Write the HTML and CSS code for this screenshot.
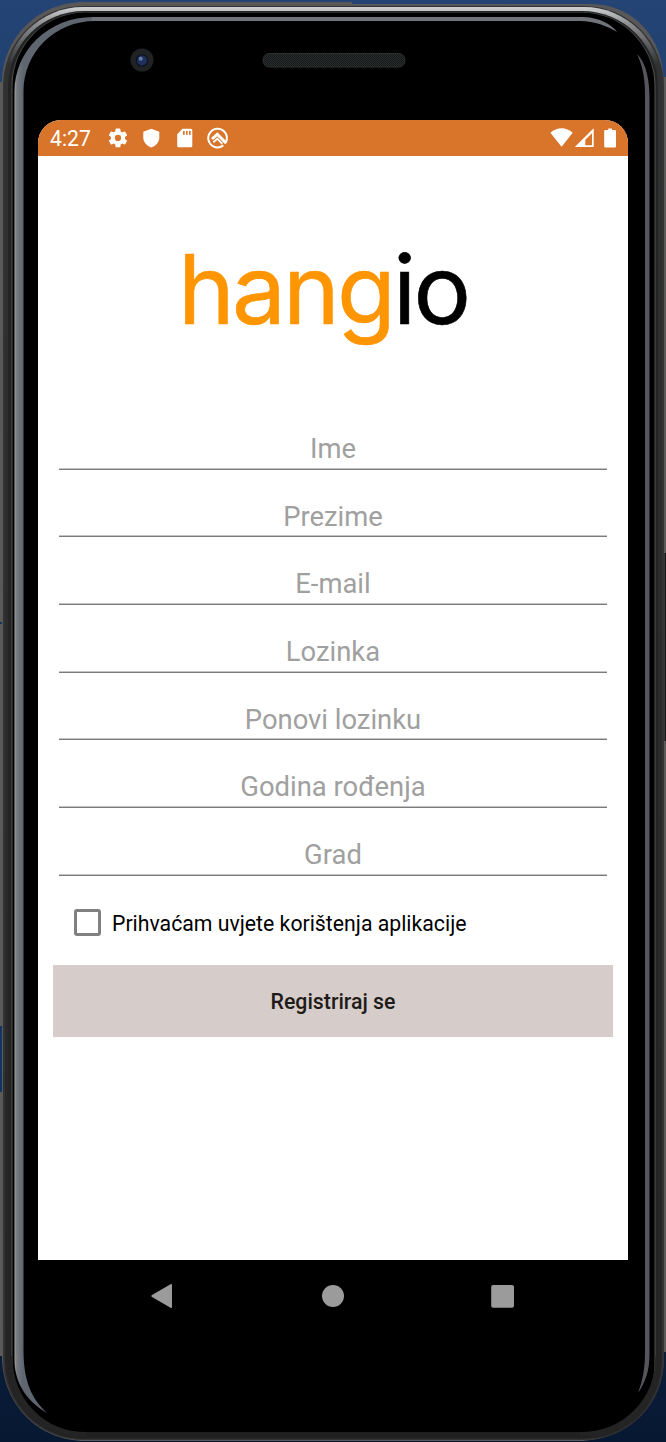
FILE: index.html
```
<!DOCTYPE html>
<html lang="hr">
<head>
<meta charset="utf-8">
<title>hangio</title>
<link rel="stylesheet" href="styles.css">
</head>
<body>
<div class="device">
  <svg class="frame" viewBox="0 0 666 1442" width="666" height="1442" aria-hidden="true">
    <defs>
      <linearGradient id="wall" x1="0" y1="0" x2="0" y2="1"><stop offset="0" stop-color="#234474"/><stop offset=".9" stop-color="#0b1f3d"/><stop offset="1" stop-color="#071832"/></linearGradient>
      <linearGradient id="metal" x1="0" y1="0" x2="0" y2="1"><stop offset="0" stop-color="#d0d1d3"/><stop offset=".012" stop-color="#8b8d8f"/><stop offset=".04" stop-color="#303132"/><stop offset="1" stop-color="#242424"/></linearGradient>
      <linearGradient id="glint" gradientUnits="userSpaceOnUse" x1="14" y1="0" x2="23" y2="0"><stop offset="0" stop-color="#aaaaac"/><stop offset=".3" stop-color="#777a80"/><stop offset="1" stop-color="#5f6670"/></linearGradient>
      <pattern id="mesh" width="2" height="2" patternUnits="userSpaceOnUse"><rect width="2" height="2" fill="#292c2c"/><path d="M0 0h1v1h-1zM1 1h1v1h-1z" fill="#171919"/></pattern>
    </defs>
    <rect width="666" height="1442" fill="url(#wall)"/>
    <path d="M0 82h3v1274H0zM664 77h2v1275h-2z" fill="#5c5959"/>
    <path d="M0 1026h2v66H0zM0 622h2v2H0z" fill="#123565"/>
    <path d="M84 2H352V4H590C635 4 664 39 664 84V1356C664 1404 626 1441 578 1441H86C38 1441 2 1404 2 1356V84C2 38 38 2 84 2Z" fill="#595757"/>
    <rect x="3" y="6" width="661" height="1434" rx="80" fill="#333"/>
    <rect x="5" y="7" width="657" height="1432" rx="78" fill="url(#metal)"/>
    <rect x="8" y="11" width="650" height="1427" rx="76" fill="#242424"/>
    <rect x="11.5" y="12" width="644" height="1425" rx="74" fill="#505152"/>
    <rect x="12.5" y="12.5" width="642" height="1424.5" rx="73" fill="#000"/>
    <rect x="86" y="1432" width="494" height="5" fill="#202020"/>
    <path d="M86 1434.5C44 1434.5 10 1402 10 1356M580 1434.5C624 1434.5 658 1402 658 1356" fill="none" stroke="#242424" stroke-width="5"/>
    <path d="M93 17C49 17 14.500 50 14.500 92V1360C14.500 1384 28 1402 47 1413C32 1399 23.500 1382 23.500 1350V92C23.500 52 55 21 95 21Z" fill="url(#glint)"/>
    <path d="M92 17H584C600 18 611 24 617 32C607 26 595 21 580 21H92Z" fill="#70737a"/>
    <path d="M637 54C647 64 649.500 82 649.500 98V1355C649.500 1371 645 1383 638 1393C643 1380 645 1367 645 1352V94C645 76 642 65 637 54Z" fill="#55555d"/>
    <path d="M664.500 553h1.500v188h-1.500z" fill="#151515"/>
    <path d="M302 1441h8v1h-8zM322 1441h8v1h-8zM348 1441h12v1h-12z" fill="#071832"/>
    <circle cx="142" cy="60" r="11.500" fill="#202224"/>
    <circle cx="142" cy="60.500" r="6.300" fill="#0c1124"/>
    <circle cx="142" cy="60.500" r="5" fill="#20305d"/>
    <circle cx="140.700" cy="58.700" r="2" fill="#687ba6"/>
    <rect x="263" y="53.500" width="142" height="13.500" rx="6.500" fill="url(#mesh)" stroke="#2d3030"/>
  </svg>

  <main class="screen">
    <header class="status">
      <span class="time">4:27</span>
      <svg class="notices" viewBox="0 0 124 24" width="124" height="24" aria-hidden="true">
        <g fill="#fff">
          <path transform="translate(-.8 .2) scale(.98)" d="M19.140 12.940c.04-.3.06-.61.06-.94s-.02-.64-.07-.94l2.030-1.580a.49.49 0 0 0 .12-.61l-1.920-3.320a.49.49 0 0 0-.59-.22l-2.390.96a7 7 0 0 0-1.620-.94l-.36-2.540a.48.48 0 0 0-.48-.41h-3.840a.47.47 0 0 0-.47.41l-.36 2.540c-.59.24-1.130.57-1.620.94l-2.390-.96a.47.47 0 0 0-.59.22L2.740 8.870a.47.47 0 0 0 .12.61l2.030 1.580a6 6 0 0 0 0 1.880l-2.030 1.580a.49.49 0 0 0-.12.61l1.920 3.320c.12.22.37.29.59.22l2.390-.96c.5.38 1.030.7 1.620.94l.36 2.540c.05.24.24.41.48.41h3.840c.24 0 .44-.17.47-.41l.36-2.540a7 7 0 0 0 1.620-.94l2.390.96c.22.080.47 0 .59-.22l1.920-3.320a.47.47 0 0 0-.12-.61zM12 15.200a3.200 3.200 0 1 1 0-6.400 3.200 3.200 0 0 1 0 6.400z"/>
          <path d="M44.300 2.700 52.300 5.700V11.500C52.300 16 49 20 44.300 21.400C39.600 20 36.300 16 36.300 11.500V5.700Z"/>
          <path fill-rule="evenodd" d="M75.500 2.700H83.800Q85.300 2.700 85.300 4.200V19.800Q85.300 21.300 83.800 21.300H71.700Q70.200 21.300 70.200 19.800V8.200ZM76 5v3.700h1.700V5ZM79 5v3.700h1.700V5ZM82 5v3.700h1.700V5Z"/>
        </g>
        <g fill="none" stroke="#fff">
          <path d="M116.300 19.400A9.300 9.300 0 1 1 119 16" stroke-width="2"/>
          <path d="M105 13 110.300 8.300 119.200 17.300" stroke-width="3"/>
          <path d="M106.300 16.300 110.300 12.800 115.300 17.800" stroke-width="1.800"/>
        </g>
      </svg>
      <svg class="system" viewBox="0 0 68 24" width="68" height="24" aria-hidden="true">
        <g fill="#fff">
          <path d="M.4 6.800C7 .8 16.200.8 22.700 6.800L11.600 20.800Z"/>
          <path fill-rule="evenodd" d="M43.700 2.300V21H24.800ZM42 7.200 35.300 13.800V19.300H42Z"/>
          <path d="M58.200 2.500H62V4H64.800Q66 4 66 5.200V20.300Q66 21.500 64.800 21.500H55.400Q54.200 21.500 54.200 20.300V5.200Q54.200 4 55.400 4H58.200Z"/>
        </g>
      </svg>
    </header>
    <div class="logo"><span class="accent">hang</span>io</div>
    <form class="form">
      <div class="field">Ime</div>
      <div class="field">Prezime</div>
      <div class="field">E-mail</div>
      <div class="field">Lozinka</div>
      <div class="field">Ponovi lozinku</div>
      <div class="field">Godina rođenja</div>
      <div class="field">Grad</div>
    </form>
    <label class="terms"><span class="box"></span><span class="termstext">Prihvaćam uvjete korištenja aplikacije</span></label>
    <button class="submit" type="button">Registriraj se</button>
  </main>
  <nav class="nav">
    <svg viewBox="0 0 366 26" width="366" height="26" aria-hidden="true">
      <g fill="#9b9b9b"><path d="M2 12 20.500 1.200Q22 .5 22 2V24Q22 25.500 20.500 24.700L2 14Q.2 13 2 12Z"/><circle cx="183" cy="13" r="11"/><rect x="341.200" y="2" width="22.800" height="22.800" rx="2"/></g>
    </svg>
  </nav>
</div>
</body>
</html>
```
FILE: styles.css
```
* { box-sizing: border-box; }
body { margin: 0; font-family: Roboto, "Noto Sans", sans-serif; }
.device { position: relative; width: 666px; height: 1442px; padding: 120px 38px 0; overflow: hidden; }
.frame { position: absolute; left: 0; top: 0; display: block; }
.screen { position: relative; height: 1140px; background: #fff; border-radius: 23px 23px 0 0; overflow: hidden; }
.status { display: flex; align-items: center; height: 36px; padding: 0 10px 0 12px; background: #d8752a; color: #fff; }
.time { width: 57px; padding-top: 1px; font-size: 21.200px; line-height: 36px; }
.system { margin-left: auto; }
.logo { height: 246px; padding: 76px 0 0 140px; font: 400 96px/115px Inter, sans-serif; letter-spacing: -2.800px; -webkit-text-stroke: .6px currentColor; white-space: nowrap; color: #000; }
.accent { color: #ff9500; }
.form { display: flex; flex-direction: column; padding: 0 21px; }
.field { height: 67.67px; padding-top: 30px; border-bottom: 1px solid #7b7b7b; box-shadow: inset 0 -1px #c4c4c4; text-align: center; font-size: 27.400px; line-height: 34px; color: #a0a0a0; }
.terms { display: flex; align-items: center; height: 68px; padding: 0 0 0 36px; margin-top: 13px; gap: 11px; }
.box { width: 27px; height: 27px; border: 3px solid #808080; border-radius: 3px; }
.termstext { padding-top: 1px; font-size: 21.250px; color: #000; }
.submit { display: block; width: 560px; height: 72px; margin: 8px 0 0 15px; padding: 1px 0 0; border: 0; background: #d6ccca; color: #1e1b19; font: 500 21.300px/71px Roboto, sans-serif; }
.nav { position: relative; display: flex; justify-content: center; padding-top: 23px; }
```
